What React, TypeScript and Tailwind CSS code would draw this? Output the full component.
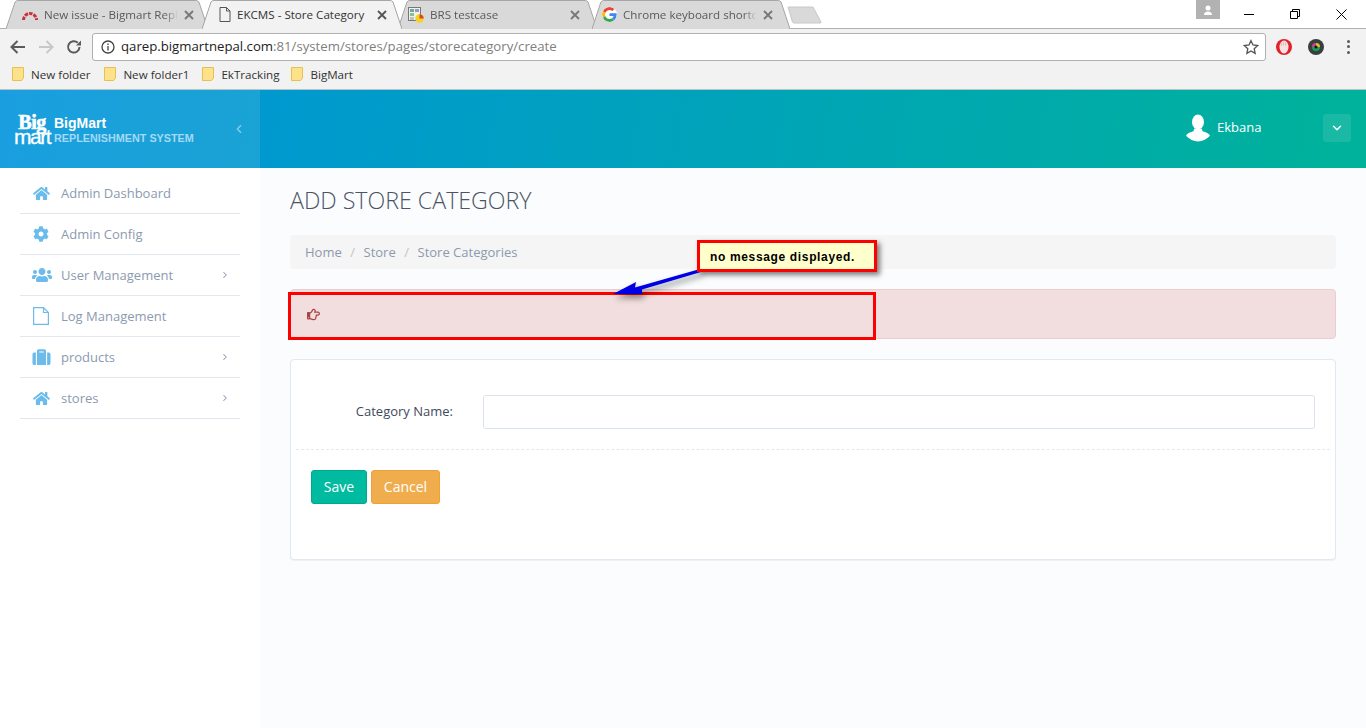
import { ReactNode } from 'react';
import { FaHome, FaCog, FaUsers, FaSuitcase, FaRegHandPointRight } from 'react-icons/fa';
import { ChevronDown, ChevronLeft, ChevronRight } from 'lucide-react';

const openSans = "font-['Open_Sans',sans-serif]";

const TabShape = ({ active }: { active?: boolean }) => (
    <svg className="absolute inset-0 w-full h-full" viewBox="0 0 200 29" preserveAspectRatio="none">
        <path
            d="M0 29 L9 2 Q10 0.5 12 0.5 L188 0.5 Q190 0.5 191 2 L200 29"
            fill={active ? '#f2f2f2' : '#d9d9d9'}
            stroke="#a6a6a6"
            strokeWidth="1"
            vectorEffect="non-scaling-stroke"
        />
    </svg>
);

const RedmineIcon = () => (
    <svg width="16" height="12" viewBox="0 0 16 12">
        <path d="M1.500 11 A6.500 6.500 0 0 1 14.500 11" fill="none" stroke="#c8323c" strokeWidth="3" strokeDasharray="3.500 1" />
    </svg>
);

const FileIcon = () => (
    <svg width="12" height="15" viewBox="0 0 12 15" fill="none" stroke="#555" strokeWidth="1">
        <path d="M1 .5 H7.500 L11 4 V14.500 H1 Z M7.500 .5 V4 H11" />
    </svg>
);

const SheetIcon = () => (
    <svg width="16" height="16" viewBox="0 0 16 16">
        <rect x="0.5" y="0.5" width="12" height="13" fill="#eef2ee" stroke="#777" />
        <rect x="2" y="2" width="4" height="3" fill="#6fa8a0" />
        <rect x="7" y="2" width="4" height="3" fill="#9a9ac0" />
        <rect x="2" y="6" width="4" height="3" fill="#8cc08c" />
        <rect x="2" y="10" width="4" height="3" fill="#c0c0c0" />
        <circle cx="11.5" cy="11.5" r="4.2" fill="#f7d21e" />
        <path d="M11.500 11.500 V7.300 A4.200 4.200 0 0 1 15.700 11.500 Z" fill="#d8452e" />
    </svg>
);

const GoogleIcon = () => (
    <svg width="15" height="15" viewBox="0 0 48 48" className="rounded-full bg-white">
        <path fill="#EA4335" d="M24 9.500c3.500 0 6.700 1.200 9.200 3.600l6.900-6.900C35.900 2.400 30.500 0 24 0 14.600 0 6.500 5.400 2.600 13.200l8 6.200C12.400 13.700 17.700 9.500 24 9.500z" />
        <path fill="#4285F4" d="M46.900 24.500c0-1.600-.1-3.100-.4-4.500H24v9h12.900c-.6 3-2.200 5.500-4.700 7.200l7.700 6c4.500-4.200 7-10.300 7-17.700z" />
        <path fill="#FBBC05" d="M10.500 28.600c-.5-1.400-.8-3-.8-4.600s.3-3.200.8-4.600l-8-6.200C.9 16.500 0 20.100 0 24s.9 7.500 2.600 10.800l7.900-6.200z" />
        <path fill="#34A853" d="M24 48c6.500 0 11.900-2.100 15.900-5.800l-7.700-6c-2.200 1.400-4.900 2.300-8.200 2.300-6.300 0-11.600-4.200-13.500-9.900l-8 6.200C6.500 42.600 14.600 48 24 48z" />
    </svg>
);

const tabs: { title: string; icon: ReactNode; cls: string; iconCls: string; active?: boolean }[] = [
    { title: 'New issue - Bigmart Repl', icon: <RedmineIcon />, cls: 'w-[202px] pl-[16px] pr-[14px]', iconCls: 'w-[16px]' },
    { title: 'EKCMS - Store Category', icon: <FileIcon />, cls: 'w-[200px] -ml-[6px] z-10 pl-[17px] pr-[15px]', iconCls: 'w-[12px]', active: true },
    { title: 'BRS testcase', icon: <SheetIcon />, cls: 'w-[199px] -ml-[4px] pl-[10px] pr-[17px]', iconCls: 'w-[16px]' },
    { title: 'Chrome keyboard shortc', icon: <GoogleIcon />, cls: 'w-[198px] -ml-[5px] pl-[10px] pr-[17px]', iconCls: 'w-[15px]' },
];

const bookmarks = [
    { label: 'New folder', cls: 'mr-[14px]' },
    { label: 'New folder1', cls: 'mr-[13px]' },
    { label: 'EkTracking', cls: 'mr-[12px]' },
    { label: 'BigMart', cls: 'mr-[14px]' },
];

const LogIcon = () => (
    <svg width="16" height="18" viewBox="0 0 16 18" fill="none" stroke="currentColor" strokeWidth="1.200">
        <path d="M.6 .6 H10.500 L15.400 5.500 V17.400 H.6 Z M10.500 .6 V5.500 H15.400" />
    </svg>
);

const menu = [
    { label: 'Admin Dashboard', icon: <FaHome className="w-[17px] h-[15px]" /> },
    { label: 'Admin Config', icon: <FaCog className="w-[16px] h-[16px]" /> },
    { label: 'User Management', icon: <FaUsers className="w-[20px] h-[18px] -ml-[1px]" />, more: true },
    { label: 'Log Management', icon: <LogIcon />, more: false },
    { label: 'products', icon: <FaSuitcase className="w-[19px] h-[18px] -ml-[1px]" />, more: true },
    { label: 'stores', icon: <FaHome className="w-[17px] h-[15px]" />, more: true },
];

const Folder = () => (
    <svg width="12" height="14" viewBox="0 0 12 14">
        <path d="M.5 .5 H11.500 V11 L9.500 13.500 H.5 Z" fill="#fde28b" stroke="#e8c04e" />
    </svg>
);

const Chrome = () => (
    <div className={`${openSans} bg-[#f2f2f2]`}>
        <div className="relative h-[28px] bg-white flex pl-[6px]">
            {tabs.map((t) => (
                <div key={t.title} className={`relative h-[29px] shrink-0 ${t.cls}`}>
                    <TabShape active={t.active} />
                    <div className="relative h-[29px] flex items-center">
                        <span className={`shrink-0 flex items-center justify-center ${t.iconCls}`}>{t.icon}</span>
                        <span
                            className={`ml-[6px] flex-1 overflow-hidden whitespace-nowrap text-[11.600px] ${
                                t.active ? 'text-[#333]' : 'text-[#5a5a5a] [mask-image:linear-gradient(to_right,black_90%,transparent)]'
                            }`}
                        >
                            {t.title}
                        </span>
                        <svg width="10" height="10" viewBox="0 0 10 10" className="ml-[6px] shrink-0" stroke={t.active ? '#555' : '#777'} strokeWidth="1.800">
                            <path d="M1 1 L9 9 M9 1 L1 9" />
                        </svg>
                    </div>
                </div>
            ))}
            <svg width="36" height="18" viewBox="0 0 36 18" className="mt-[6px] -ml-[3px] shrink-0">
                <path d="M1 1 H26 L34 16 Q34.500 17 33 17 H7 Q6 17 5.500 16 Z" fill="#d9d9d9" stroke="#c8c8c8" />
            </svg>
            <div className="ml-auto mr-[2px] flex items-start">
                <div className="w-[24px] h-[19px] bg-[#b2b2b2] flex items-center justify-center mr-[6px]">
                    <svg width="10" height="10" viewBox="0 0 10 10" fill="#fff">
                        <circle cx="5" cy="3" r="2.500" />
                        <path d="M1 10 Q1 6.500 5 6.500 Q9 6.500 9 10 Z" />
                    </svg>
                </div>
                <div className="w-[46px] h-[28px] flex items-center justify-center">
                    <span className="w-[10px] h-px bg-black" />
                </div>
                <div className="w-[46px] h-[28px] flex items-center justify-center">
                    <svg width="10" height="10" viewBox="0 0 10 10" fill="none" stroke="#000">
                        <path d="M.5 2.500 H7.500 V9.500 H.5 Z M2.500 2.500 V.5 H9.500 V7.500 H7.500" />
                    </svg>
                </div>
                <div className="w-[46px] h-[28px] flex items-center justify-center">
                    <svg width="11" height="11" viewBox="0 0 11 11" stroke="#000">
                        <path d="M.5 .5 L10.500 10.500 M10.500 .5 L.5 10.500" />
                    </svg>
                </div>
            </div>
        </div>
        <div className="h-[34px] border-t border-[#b0b0b0] pt-[2px] flex items-center">
            <svg width="16" height="14" viewBox="0 0 16 14" className="ml-[10px]" fill="none" stroke="#5a5a5a" strokeWidth="2">
                <path d="M15 7 H2 M7.500 1 L1.500 7 L7.500 13" />
            </svg>
            <svg width="16" height="14" viewBox="0 0 16 14" className="ml-[12px]" fill="none" stroke="#c8c8c8" strokeWidth="2">
                <path d="M1 7 H14 M8.500 1 L14.500 7 L8.500 13" />
            </svg>
            <svg width="16" height="16" viewBox="0 0 16 16" className="ml-[12px]" fill="none" stroke="#5a5a5a" strokeWidth="2">
                <path d="M13.500 8 A5.700 5.700 0 1 1 11.800 3.800" />
                <path d="M10 6.500 H15 V1.500 Z" fill="#5a5a5a" stroke="none" />
            </svg>
            <div className="ml-[10px] w-[1174px] h-[28px] bg-white border border-[#b0b0b0] rounded-[3px] flex items-center pl-[8px] pr-[6px]">
                <svg width="14" height="14" viewBox="0 0 14 14" fill="none" stroke="#444" strokeWidth="1.300">
                    <circle cx="7" cy="7" r="6" />
                    <path d="M7 6 V10.500 M7 3.500 V5" />
                </svg>
                <span className="ml-[6px] pt-[1px] text-[13.200px] text-[#222] whitespace-nowrap">
                    qarep.bigmartnepal.com<span className="text-[#808080]">:81/system/stores/pages/storecategory/create</span>
                </span>
                <svg width="16" height="16" viewBox="0 0 24 24" className="ml-auto" fill="none" stroke="#555" strokeWidth="2">
                    <path d="M12 2.500 L15 9 L22 9.800 L16.800 14.500 L18.200 21.500 L12 18 L5.800 21.500 L7.200 14.500 L2 9.800 L9 9 Z" />
                </svg>
            </div>
            <svg width="18" height="18" viewBox="0 0 18 18" className="ml-[9px]">
                <circle cx="9" cy="9" r="8" fill="#e2202c" />
                <ellipse cx="9" cy="9" rx="4.500" ry="6.500" fill="#f4e3e0" />
                <path d="M6.500 8 V5 M8.500 7.500 V3.500 M10.500 8 V4.500" stroke="#d9b4ae" strokeWidth="0.800" />
            </svg>
            <svg width="16" height="16" viewBox="0 0 16 16" className="ml-[15px]">
                <circle cx="8" cy="8" r="8" fill="#3a3d42" />
                <circle cx="8" cy="8" r="4" fill="#12a35a" />
                <path d="M8 4 A4 4 0 0 1 12 8 H8 Z" fill="#e8b820" />
                <path d="M4 8 A4 4 0 0 1 8 4 V8 Z" fill="#d83a8a" />
                <circle cx="8" cy="8" r="1.500" fill="#111" />
            </svg>
            <div className="ml-[23px] flex flex-col gap-[2.500px]">
                <span className="w-[3px] h-[3px] bg-[#5a5a5a] rounded-full" />
                <span className="w-[3px] h-[3px] bg-[#5a5a5a] rounded-full" />
                <span className="w-[3px] h-[3px] bg-[#5a5a5a] rounded-full" />
            </div>
        </div>
        <div className="h-[28px] border-b border-[#b8c4c4] flex items-center pl-[12px] pb-[2px]">
            {bookmarks.map((b) => (
                <div key={b.label} className={`flex items-center text-[11.600px] text-[#333] ${b.cls}`}>
                    <Folder />
                    <span className="ml-[7px]">{b.label}</span>
                </div>
            ))}
        </div>
    </div>
);

const Header = () => (
    <div className="h-[78px] flex bg-[linear-gradient(100deg,#0093dc,#00b29a)] text-white">
        <div className="w-[260px] bg-white/10 flex items-center pl-[13px]">
            <div className="flex flex-col items-center w-[38px] font-['Liberation_Sans',sans-serif] mt-[1px]">
                <span className="font-['Liberation_Serif',serif] font-bold text-[20px] leading-[15px] h-[15px] tracking-[-0.5px] [-webkit-text-stroke:0.6px_white]">Big</span>
                <span className="text-[21px] leading-[14px] h-[14px] tracking-[-1.500px] [-webkit-text-stroke:0.3px_white]">mart</span>
            </div>
            <div className="ml-[3px] font-['Liberation_Sans',sans-serif] mt-[1px]">
                <div className="text-[14px] font-bold leading-[16px]">BigMart</div>
                <div className="text-[10.800px] font-bold leading-[14px] text-[#a5daf5] whitespace-nowrap">REPLENISHMENT SYSTEM</div>
            </div>
            <ChevronLeft className="ml-auto mr-[14px] w-[14px] h-[16px] text-[#8fcdf0]" strokeWidth={2} />
        </div>
        <div className={`flex-1 flex items-center pb-[3px] ${openSans}`}>
            <svg width="24" height="28" viewBox="0 0 26 29" fill="#fff" className="ml-[926px]">
                <ellipse cx="13" cy="8" rx="6.500" ry="8" />
                <path d="M9 15 H17 L18 18 Q25 20 26 23 Q20 29 13 29 Q6 29 0 23 Q1 20 8 18 Z" />
            </svg>
            <span className="ml-[7px] text-[13px]">Ekbana</span>
            <div className="ml-[62px] w-[28px] h-[28px] rounded-[3px] bg-white/10 flex items-center justify-center">
                <ChevronDown className="w-[14px] h-[14px]" strokeWidth={2.500} />
            </div>
        </div>
    </div>
);

const Sidebar = () => (
    <aside className={`w-[260px] shrink-0 bg-white px-[20px] pt-[5px] ${openSans}`}>
        {menu.map((m) => (
            <div key={m.label} className="h-[41px] border-b border-[#e1e8f0] flex items-center text-[13px] text-[#8c9ab0]">
                <span className="w-[41px] pl-[13px] flex items-center justify-start text-[#6bbcea]">{m.icon}</span>
                <span className="pt-[1px]">{m.label}</span>
                {m.more && <ChevronRight className="ml-auto mr-[10px] w-[10px] h-[12px] text-[#8c9ab0]" strokeWidth={2.500} />}
            </div>
        ))}
    </aside>
);

const Main = () => (
    <main className={`flex-1 px-[30px] ${openSans}`}>
        <h1 className="mt-[19px] text-[23.200px] leading-[26px] font-light text-[#4a5464] whitespace-nowrap">ADD STORE CATEGORY</h1>
        <div className="mt-[22px] h-[34px] rounded-[4px] bg-[#f5f5f5] flex items-center px-[15px] pt-[1px] text-[13px] text-[#8c9ab0]">
            <span>Home</span>
            <span className="mx-[8.500px] text-[#c4c4c4]">/</span>
            <span>Store</span>
            <span className="mx-[8.500px] text-[#c4c4c4]">/</span>
            <span>Store Categories</span>
        </div>
        <div className="mt-[20px] h-[50px] rounded-[4px] bg-[#f2dede] border border-[#ebccd1] flex items-center pl-[15px]">
            <FaRegHandPointRight className="w-[15px] h-[13px] text-[#a94442]" />
        </div>
        <div className="mt-[20px] h-[201px] rounded-[4px] bg-white border border-[#e1e8f0] shadow-[0_1px_1px_rgba(0,0,0,0.05)] px-[5px]">
            <div className="mt-[35px] flex items-center">
                <label className="w-[157px] text-right text-[13px] font-medium text-[#3f4a5c]">Category Name:</label>
                <input className="ml-[30px] w-[832px] h-[34px] bg-white border border-[#dbe3ed] rounded-[3px]" />
            </div>
            <div className="mt-[20px] border-t border-dashed border-[#e5e9ee]" />
            <div className="mt-[20px] ml-[15px] flex gap-[4px] text-[14px] text-white">
                <button className="w-[56px] h-[34px] pb-[2px] rounded-[3px] bg-[#00bb9f] border border-[#00a88f]">Save</button>
                <button className="w-[69px] h-[34px] pb-[2px] rounded-[3px] bg-[#f0ad4e] border border-[#eea236]">Cancel</button>
            </div>
        </div>
    </main>
);

const Annotations = () => (
    <>
        <div className="absolute left-[288px] top-[292px] w-[588px] h-[48px] border-[3px] border-[#ff0000]" />
        <svg className="absolute left-[606px] top-[262px] overflow-visible drop-shadow-[2px_4px_3px_rgba(0,0,0,0.45)]" width="100" height="44" viewBox="0 0 100 44">
            <path d="M7 32 L30 20 L29 25.500 L94 7 L95 10 L36 27.500 L36 32 Z" fill="#0000e6" />
        </svg>
        <div className="absolute left-[697px] top-[240px] w-[180px] h-[32px] border-[3px] border-[#ff0000] bg-[#ffffcc] shadow-[3px_3px_5px_rgba(0,0,0,0.5)] flex items-center pl-[10px] pt-[1px] font-['Liberation_Sans',sans-serif] font-bold text-[12px] tracking-[0.650px] text-black whitespace-nowrap">
            no message displayed.
        </div>
    </>
);

const App = () => (
    <div className="relative h-[728px] overflow-hidden bg-[#fbfcfe]">
        <Chrome />
        <Header />
        <div className="flex h-[560px]">
            <Sidebar />
            <Main />
        </div>
        <Annotations />
    </div>
);

export default App;
